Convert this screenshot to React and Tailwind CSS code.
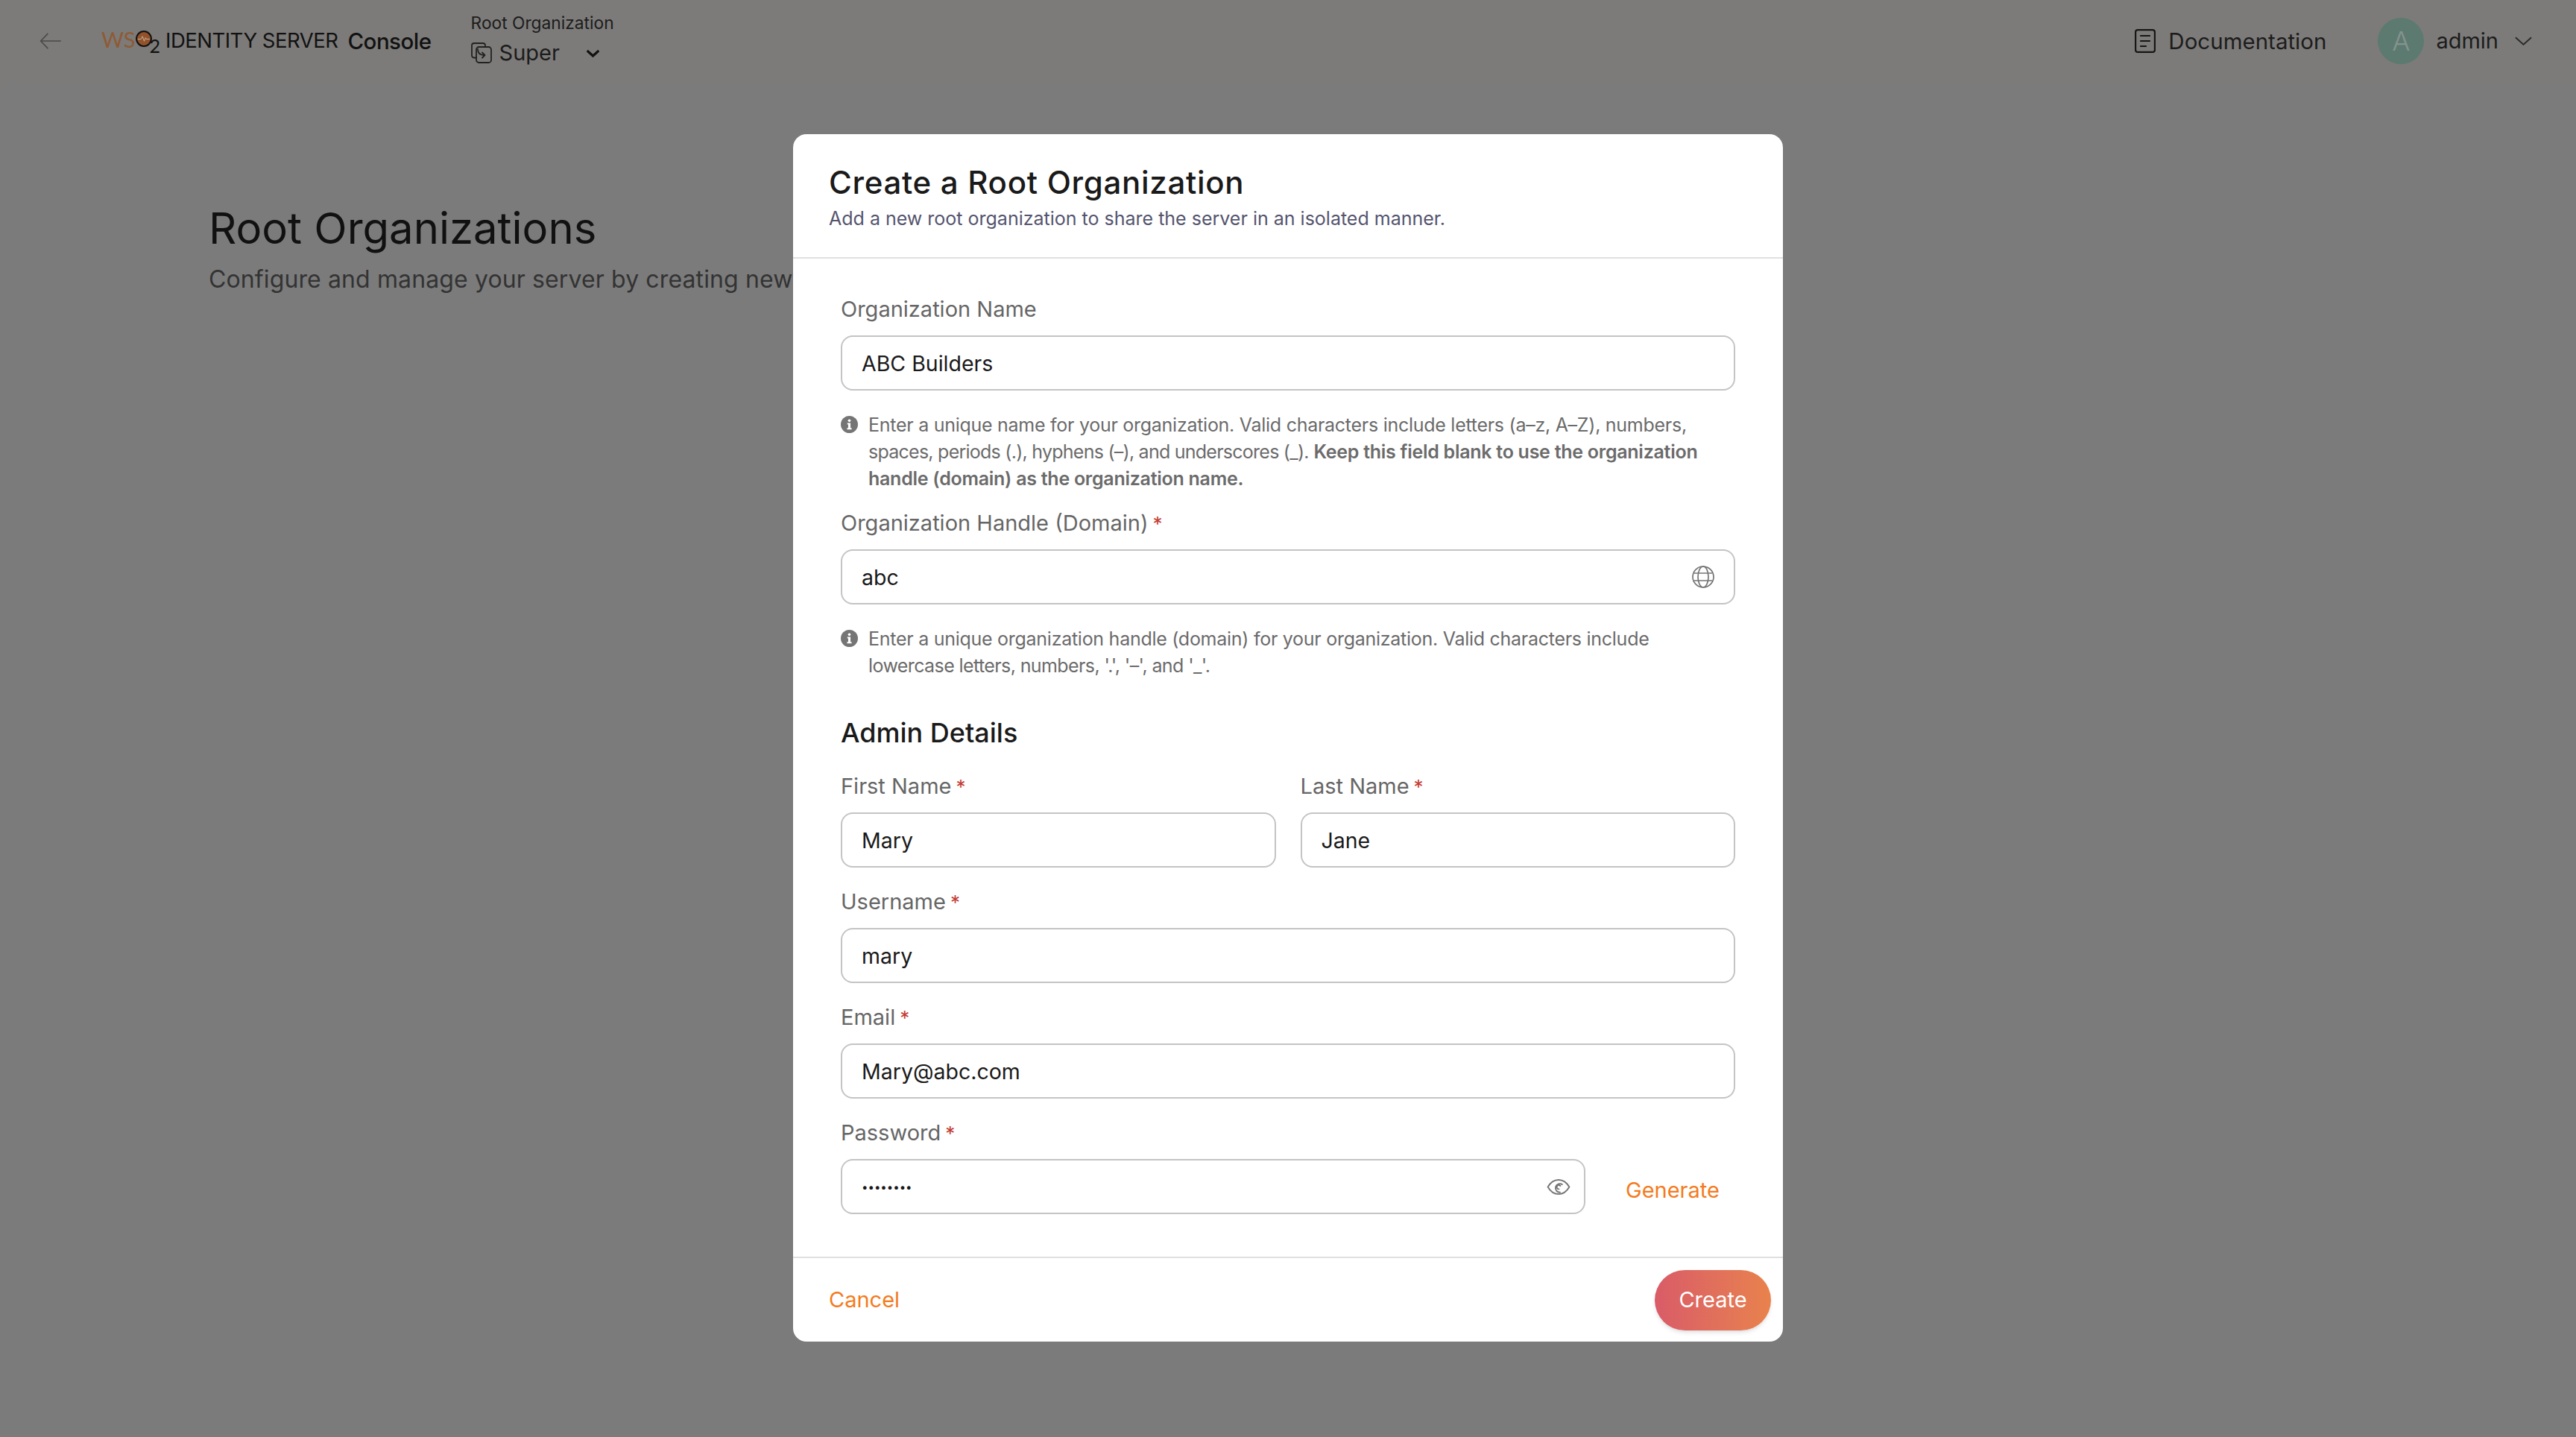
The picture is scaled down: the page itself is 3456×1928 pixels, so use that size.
import React from "react";

/* ---------------- ICONS ---------------- */

const InfoIcon = () => (
  <svg viewBox="0 0 24 24" className="w-[23px] h-[23px] shrink-0 mt-[6px]">
    <circle cx="12" cy="12" r="12" fill="#757575" />
    <circle cx="12" cy="6.600" r="1.900" fill="#fff" />
    <path d="M9.200 10h4.400v7h1.600v2H8.800v-2h1.600v-5H9.200z" fill="#fff" />
  </svg>
);

const EyeIcon = () => (
  <svg viewBox="0 0 32 24" className="w-[32px] h-[23px] -mr-[9px]" fill="none" stroke="#757575" strokeWidth="2">
    <path d="M1 12C5 5 10 2 16 2s11 3 15 10c-4 7-9 10-15 10S5 19 1 12z" />
    <path d="M21 8.500a6 6 0 1 0-3 11" strokeLinecap="round" />
    <path d="M18.500 10.500a2.800 2.800 0 1 0-2 4.500" strokeLinecap="round" />
  </svg>
);

const GlobeIcon = () => (
  <svg viewBox="0 0 30 30" className="w-[30px] h-[30px] -mr-[1px]" fill="none" stroke="#757575" strokeWidth="1.700">
    <circle cx="15" cy="15" r="14" />
    <ellipse cx="15" cy="15" rx="7" ry="14" />
    <path d="M2.500 10h25M2.500 20h25" />
  </svg>
);

const SwitchIcon = () => (
  <svg viewBox="0 0 28 28" className="w-[28px] h-[28px]" fill="none" stroke="#222" strokeWidth="1.800" strokeLinecap="round" strokeLinejoin="round">
    <path d="M7 20.500H4a3 3 0 0 1-3-3V4a3 3 0 0 1 3-3h12a3 3 0 0 1 3 3v2" />
    <rect x="7" y="6" width="20" height="21" rx="3.500" />
    <path d="M9 9c0 5 2 8 9 8M15 13.500l3.500 3.500-3.500 3.500" />
  </svg>
);

const DocIcon = () => (
  <svg viewBox="0 0 28 32" className="w-[28px] h-[32px]" fill="none" stroke="#161616" strokeWidth="2.200" strokeLinecap="round">
    <rect x="1.100" y="1.100" width="25.800" height="29.800" rx="3" />
    <path d="M8 9h12M8 16h12M8 23h7" />
  </svg>
);

const Chevron = ({ className, width = 2 }) => (
  <svg viewBox="0 0 24 12" className={className} fill="none" stroke="currentColor" strokeWidth={width}>
    <path d="M1 1l11 10L23 1" />
  </svg>
);

const Logo = () => (
  <div className="flex items-start w-[75px] h-[32px] text-[#8f5a33] font-['Lato',sans-serif] font-normal text-[29px] leading-[27px]">
    <span>WS</span>
    <svg viewBox="0 0 24 24" className="w-[22px] h-[22px] mt-[2px] shrink-0">
      <circle cx="12" cy="12" r="10.800" fill="#93532a" stroke="#111" strokeWidth="2.200" />
      <path d="M3 12.500h5l2-4 2.500 7 2-5 1 2h5" fill="none" stroke="#c9b8a8" strokeWidth="1" />
    </svg>
    <span className="-ml-[3px] mt-[12px] text-[#111] text-[25px] leading-[20px]">2</span>
  </div>
);

/* ---------------- HEADER ---------------- */

const Header = () => (
  <div className="h-[110px] flex items-center justify-between">
    <div className="flex items-center">
      <svg viewBox="0 0 32 24" className="w-[32px] h-[22px] ml-[52px] mr-[52px]" fill="none" stroke="#4a4a48" strokeWidth="1.800">
        <path d="M31 12H2M12 1L1.500 12 12 23" />
      </svg>
      <Logo />
      <span className="ml-[11px] text-[27.500px] text-[#111] tracking-[-0.5px]">IDENTITY SERVER</span>
      <span className="ml-[13px] text-[29.500px] font-medium text-[#111] tracking-[-0.5px]">Console</span>
      <div className="ml-[53px] flex flex-col -mt-[5px]">
        <span className="text-[22.750px] leading-[30px] text-[#1c1c1c]">Root Organization</span>
        <div className="flex items-center mt-[7px]">
          <SwitchIcon />
          <span className="ml-[10px] text-[29px] leading-[36px] text-[#1c1c1c]">Super</span>
          <Chevron className="ml-[36px] w-[17px] h-[11px] text-[#111]" width={4.500} />
        </div>
      </div>
    </div>
    <div className="flex items-center pr-[59px]">
      <DocIcon />
      <span className="ml-[17px] text-[29.500px] text-[#1c1c1c]">Documentation</span>
      <div className="ml-[69px] w-[62px] h-[62px] rounded-full bg-[#5c7a70] flex items-center justify-center text-[36px] font-light text-[#85938e]">
        A
      </div>
      <span className="ml-[16px] text-[29px] text-[#1c1c1c]">admin</span>
      <Chevron className="ml-[22px] w-[23px] h-[12px] text-[#2b2b2b]" />
    </div>
  </div>
);

/* ---------------- FORM PIECES ---------------- */

const Label = ({ children, required }) => (
  <label className="block h-[36px] leading-[36px] mb-[17px] text-[29px] text-[#666666]">
    {children}
    {required && <span className="ml-[6px] text-[26px] text-[#c43c32]">*</span>}
  </label>
);

const Input = ({ value, children, className = "", valueClass = "text-[28.500px]" }) => (
  <div className={`h-[74px] flex items-center justify-between pl-[26px] pr-[27px] border-2 border-[#c4c4c4] rounded-[16px] bg-white ${className}`}>
    <span className={`pt-[2px] text-[#1a1a1a] ${valueClass}`}>{value}</span>
    {children}
  </div>
);

const Hint = ({ children }) => (
  <div className="flex gap-[14px] mt-[28px] text-[25px] leading-[36px] tracking-[-0.27px] text-[#6b6b6b]">
    <InfoIcon />
    <p>{children}</p>
  </div>
);

const Field = ({ label, value, required, className = "" }) => (
  <div className={className}>
    <Label required={required}>{label}</Label>
    <Input value={value} />
  </div>
);

/* ---------------- MAIN COMPONENT ---------------- */

const App = () => {
  return (
    <div className="relative w-full h-[1928px] overflow-hidden bg-[#7b7b7b] font-['Inter',sans-serif]">
      <div className="bg-[#7c7b79]">
        <Header />
        <div className="rounded-tl-[22px] bg-[#7b7b7b] pl-[280px] pt-[164px] h-[1818px]">
          <h1 className="text-[58px] leading-[64px] text-[#111111]">Root Organizations</h1>
          <p className="mt-[15px] text-[32px] leading-[44px] tracking-[0.12px] text-[#333333]">
            Configure and manage your server by creating new root organizations.
          </p>
        </div>
      </div>

      <div className="absolute left-[1064px] top-[180px] w-[1328px] h-[1620px] bg-white rounded-[18px] flex flex-col overflow-hidden">
        <div className="h-[167px] shrink-0 px-[48px] pt-[40px] border-b-2 border-[#e0e0e0]">
          <h2 className="text-[42px] leading-[50px] tracking-[0.7px] font-medium text-[#1a1a1a]">Create a Root Organization</h2>
          <p className="mt-[6px] text-[25px] leading-[34px] text-[#55556f]">
            Add a new root organization to share the server in an isolated manner.
          </p>
        </div>

        <div className="flex-1 pl-[64px] pr-[64px] pt-[50px]">
          <Field label="Organization Name" value="ABC Builders" />
          <Hint>
            Enter a unique name for your organization. Valid characters include letters (a–z, A–Z), numbers,
            <br />
            <span className="tracking-[-0.75px]">spaces, periods (.), hyphens (–), and underscores (_).</span>{" "}
            <b className="font-semibold">
              Keep this field blank to use the organization
              <br />
              handle (domain) as the organization name.
            </b>
          </Hint>

          <div className="mt-[24px]">
            <Label required>Organization Handle (Domain)</Label>
            <Input value="abc">
              <GlobeIcon />
            </Input>
          </div>
          <Hint>
            Enter a unique organization handle (domain) for your organization. Valid characters include
            <br />
            <span className="tracking-[-0.6px]">lowercase letters, numbers, '.', '–', and '_'.</span>
          </Hint>

          <h3 className="mt-[50px] text-[36px] leading-[44px] font-medium text-[#1a1a1a]">Admin Details</h3>

          <div className="mt-[32px] flex gap-[33px]">
            <Field className="flex-1" label="First Name" value="Mary" required />
            <Field className="flex-1" label="Last Name" value="Jane" required />
          </div>
          <Field className="mt-[28px]" label="Username" value="mary" required />
          <Field className="mt-[28px]" label="Email" value="Mary@abc.com" required />

          <div className="mt-[28px]">
            <Label required>Password</Label>
            <div className="flex items-center">
              <Input value="••••••••" valueClass="text-[15px]" className="w-[999px]">
                <EyeIcon />
              </Input>
              <button className="ml-[54px] mt-[10px] text-[29px] text-[#f47b20]">Generate</button>
            </div>
          </div>
        </div>

        <div className="h-[114px] shrink-0 flex items-center justify-between pl-[48px] pr-[16px] border-t-2 border-[#e0e0e0]">
          <button className="-mt-[1px] text-[29px] text-[#f47b20]">Cancel</button>
          <button className="w-[156px] h-[81px] rounded-full bg-gradient-to-r from-[#d95b67] to-[#e8824c] shadow-md text-[29px] text-white">
            Create
          </button>
        </div>
      </div>
    </div>
  );
};

export default App;
